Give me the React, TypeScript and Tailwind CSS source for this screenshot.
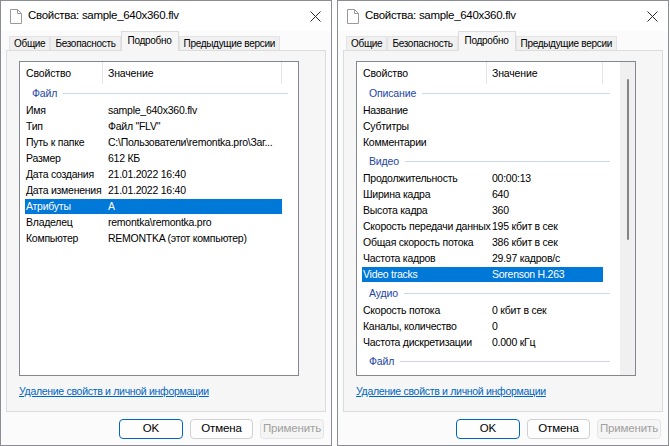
import React from "react";

type Item =
  | { kind: "group"; label: string; first?: boolean }
  | { kind: "row"; name: string; value?: string; selected?: boolean };

const leftItems: Item[] = [
  { kind: "group", label: "Файл", first: true },
  { kind: "row", name: "Имя", value: "sample_640x360.flv" },
  { kind: "row", name: "Тип", value: 'Файл "FLV"' },
  { kind: "row", name: "Путь к папке", value: "C:\\Пользователи\\remontka.pro\\Заг..." },
  { kind: "row", name: "Размер", value: "612 КБ" },
  { kind: "row", name: "Дата создания", value: "21.01.2022 16:40" },
  { kind: "row", name: "Дата изменения", value: "21.01.2022 16:40" },
  { kind: "row", name: "Атрибуты", value: "A", selected: true },
  { kind: "row", name: "Владелец", value: "remontka\\remontka.pro" },
  { kind: "row", name: "Компьютер", value: "REMONTKA (этот компьютер)" },
];

const rightItems: Item[] = [
  { kind: "group", label: "Описание", first: true },
  { kind: "row", name: "Название" },
  { kind: "row", name: "Субтитры" },
  { kind: "row", name: "Комментарии" },
  { kind: "group", label: "Видео" },
  { kind: "row", name: "Продолжительность", value: "00:00:13" },
  { kind: "row", name: "Ширина кадра", value: "640" },
  { kind: "row", name: "Высота кадра", value: "360" },
  { kind: "row", name: "Скорость передачи данных", value: "195 кбит в сек" },
  { kind: "row", name: "Общая скорость потока", value: "386 кбит в сек" },
  { kind: "row", name: "Частота кадров", value: "29.97 кадров/с" },
  { kind: "row", name: "Video tracks", value: "Sorenson H.263", selected: true },
  { kind: "group", label: "Аудио" },
  { kind: "row", name: "Скорость потока", value: "0 кбит в сек" },
  { kind: "row", name: "Каналы, количество", value: "0" },
  { kind: "row", name: "Частота дискретизации", value: "0.000 кГц" },
  { kind: "group", label: "Файл" },
];

function FileIcon() {
  return (
    <svg width="12" height="15" viewBox="0 0 12 15" fill="none">
      <path d="M0.5 0.5 H7.5 L11.5 4.5 V14.5 H0.5 Z" stroke="#9a9a9a" fill="#ffffff" />
      <path d="M7.5 0.5 V4.5 H11.5" stroke="#9a9a9a" />
    </svg>
  );
}

function CloseIcon() {
  return (
    <svg width="11" height="11" viewBox="0 0 11 11" fill="none">
      <path d="M0.5 0.5 L10.5 10.5 M10.5 0.5 L0.5 10.5" stroke="#2b2b2b" strokeWidth="1" />
    </svg>
  );
}

function ListBox({
  items,
  col1,
  col2,
  scroll,
}: {
  items: Item[];
  col1: number;
  col2: number;
  scroll?: boolean;
}) {
  return (
    <div className="flex h-[315px] w-[280px] overflow-hidden border border-[#828790] bg-white">
      <div className="min-w-0 flex-1 overflow-hidden">
        <div className="flex h-[22px] text-black">
          <div className="flex items-center border-r border-[#e5e5e5] pl-[6px]" style={{ width: col1 }}>
            Свойство
          </div>
          <div className="flex items-center border-r border-[#e5e5e5] pl-[5px]" style={{ width: col2 }}>
            Значение
          </div>
        </div>
        {items.map((it, i) =>
          it.kind === "group" ? (
            <div
              key={i}
              className={`flex h-[18px] items-center pr-[10px] pl-[12px] ${it.first ? "" : "mt-[2px]"}`}
            >
              <span className="text-[#2346a6]">{it.label}</span>
              <div className="ml-[6px] h-px flex-1 bg-[#cbd8ee]" />
            </div>
          ) : (
            <div key={i} className="flex h-[16px] items-center pl-[5px] tracking-[-0.25px]">
              <div
                className={`flex h-[15px] items-center whitespace-nowrap ${
                  it.selected ? "bg-[#0078d7] text-white" : "text-black"
                }`}
                style={{ width: col1 + col2 - 5 }}
              >
                <div className="shrink-0 pl-[1px]" style={{ width: col1 - 4 }}>
                  {it.name}
                </div>
                <div className="pl-[4px]">{it.value}</div>
              </div>
            </div>
          )
        )}
      </div>
      {scroll && (
        <div className="flex w-[15px] shrink-0 justify-center bg-[#f0f0f0] pt-[17px]">
          <div className="h-[161px] w-[2px] rounded-full bg-[#858585]" />
        </div>
      )}
    </div>
  );
}

function Dialog({
  items,
  col1,
  col2,
  scroll,
}: {
  items: Item[];
  col1: number;
  col2: number;
  scroll?: boolean;
}) {
  const tabs = ["Общие", "Безопасность", "Подробно", "Предыдущие версии"];
  return (
    <div className="flex h-[446px] w-[332px] flex-col border border-[#8c8c96] bg-[#fbfbfb] text-[10.5px] leading-none tracking-[-0.15px]">
      <div className="flex h-[30px] shrink-0 items-center bg-white pr-[10px] pl-[9px]">
        <FileIcon />
        <span className="ml-[6px] text-[11.5px] tracking-[-0.3px] text-black">Свойства: sample_640x360.flv</span>
        <div className="ml-auto flex items-center">
          <CloseIcon />
        </div>
      </div>
      <div className="flex h-[19px] shrink-0 items-end pl-[8px] text-[10px] tracking-[-0.3px]">
        {tabs.map((t) =>
          t === "Подробно" ? (
            <div
              key={t}
              className="relative z-10 -mb-px flex h-[20px] items-center border border-b-0 border-[#dcdcdc] bg-[#f6f6f6] px-[6px] pb-[2px] text-black"
            >
              {t}
            </div>
          ) : (
            <div
              key={t}
              className="flex h-[14px] items-center border border-b-0 border-[#e3e3e3] bg-[#f0f0f0] px-[4px] text-black"
            >
              {t}
            </div>
          )
        )}
      </div>
      <div className="mx-[5px] flex h-[362px] shrink-0 flex-col border border-[#dcdcdc] bg-[#f6f6f6] pt-[10px] pl-[12px]">
        <ListBox items={items} col1={col1} col2={col2} scroll={scroll} />
        <a className="mt-[10px] text-[10.5px] tracking-[-0.3px] text-[#0067c0] underline" href="#">
          Удаление свойств и личной информации
        </a>
      </div>
      <div className="mt-[7px] flex justify-end gap-[7px] pr-[7px]">
        <button className="h-[20px] w-[64px] rounded-[4px] border border-[#0067c0] bg-[#fdfdfd] text-[11.5px] text-black">
          OK
        </button>
        <button className="h-[20px] w-[63px] rounded-[4px] border border-[#d0d0d0] bg-[#fdfdfd] text-[11.5px] text-black">
          Отмена
        </button>
        <button className="h-[20px] w-[64px] rounded-[4px] border border-[#e5e5e5] bg-[#f5f5f5] text-[11.5px] text-[#a0a0a0]">
          Применить
        </button>
      </div>
    </div>
  );
}

export default function App() {
  return (
    <div
      className="flex h-[446px] w-[670px] gap-[5px] overflow-hidden bg-white"
      style={{ fontFamily: '"Liberation Sans", Arial, sans-serif' }}
    >
      <Dialog items={leftItems} col1={83} col2={179} />
      <Dialog items={rightItems} col1={130} col2={116} scroll />
    </div>
  );
}
